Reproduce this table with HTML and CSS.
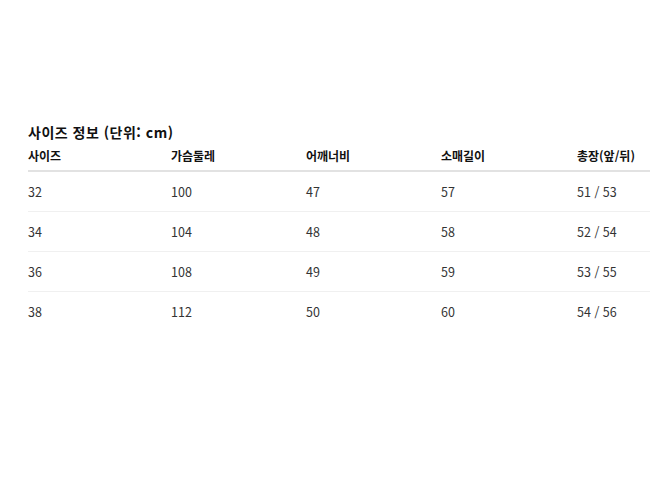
FILE: index.html
```html
<!DOCTYPE html>
<html lang="ko">
<head>
<meta charset="utf-8">
<link rel="stylesheet" href="styles.css">
</head>
<body>
<section class="size-info">
  <h3 class="title">사이즈 정보 (단위: cm)</h3>
  <table class="size-table">
    <colgroup>
      <col class="c1"><col class="c2"><col class="c3"><col class="c4"><col class="c5">
    </colgroup>
    <thead>
      <tr><th>사이즈</th><th>가슴둘레</th><th>어깨너비</th><th>소매길이</th><th>총장(앞/뒤)</th></tr>
    </thead>
    <tbody>
      <tr><td>32</td><td>100</td><td>47</td><td>57</td><td>51 / 53</td></tr>
      <tr><td>34</td><td>104</td><td>48</td><td>58</td><td>52 / 54</td></tr>
      <tr><td>36</td><td>108</td><td>49</td><td>59</td><td>53 / 55</td></tr>
      <tr><td>38</td><td>112</td><td>50</td><td>60</td><td>54 / 56</td></tr>
    </tbody>
  </table>
</section>
</body>
</html>
```
FILE: styles.css
```css
html, body {
  margin: 0;
  padding: 0;
  background: #fff;
}
body {
  font-family: "Noto Sans CJK KR", "Noto Sans", sans-serif;
  color: #222;
}
.size-info {
  padding: 123px 0 0 28px;
}
.title {
  margin: 0 0 4px 0;
  font-size: 14px;
  line-height: 18px;
  font-weight: 700;
  letter-spacing: 0.5px;
  color: #111;
}
.size-table {
  border-collapse: collapse;
  table-layout: fixed;
  width: 622px;
}
.c1 { width: 143px; }
.c2 { width: 135px; }
.c3 { width: 135px; }
.c4 { width: 136px; }
.c5 { width: 73px; }
.size-table th {
  text-align: left;
  white-space: nowrap;
  font-size: 12px;
  font-weight: 700;
  line-height: 16px;
  padding: 3px 0 6px 0;
  border-bottom: 2px solid #e2e2e2;
  color: #111;
}
.size-table td {
  white-space: nowrap;
  font-size: 12.5px;
  line-height: 16px;
  padding: 12px 0 11px 0;
  border-bottom: 1px solid #f0f0f0;
  color: #333;
}
.size-table tbody tr:last-child td {
  border-bottom: none;
}
```
